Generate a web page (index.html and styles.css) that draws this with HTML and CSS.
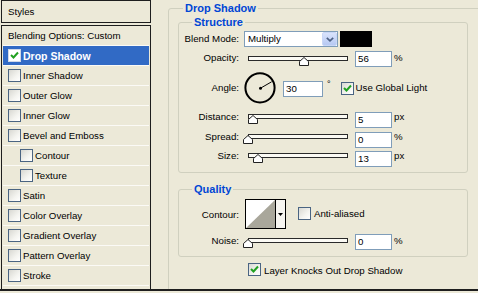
FILE: index.html
```html
<!DOCTYPE html>
<html>
<head>
<meta charset="utf-8">
<link rel="stylesheet" href="styles.css">
</head>
<body>
<div class="dialog">
  <div class="styles">
    <div class="styles-head">Styles</div>
    <div class="styles-list">
      <div class="item">Blending Options: Custom</div>
      <div class="item selected"><span class="cb"><svg width="11" height="11" viewBox="0 0 11 11"><polyline points="2,5 4.5,7.5 9,2.5" fill="none" stroke="#21a121" stroke-width="2"/></svg></span><span>Drop Shadow</span></div>
      <div class="item"><span class="cb"></span><span>Inner Shadow</span></div>
      <div class="item"><span class="cb"></span><span>Outer Glow</span></div>
      <div class="item"><span class="cb"></span><span>Inner Glow</span></div>
      <div class="item"><span class="cb"></span><span>Bevel and Emboss</span></div>
      <div class="item sub"><span class="cb"></span><span>Contour</span></div>
      <div class="item sub"><span class="cb"></span><span>Texture</span></div>
      <div class="item"><span class="cb"></span><span>Satin</span></div>
      <div class="item"><span class="cb"></span><span>Color Overlay</span></div>
      <div class="item"><span class="cb"></span><span>Gradient Overlay</span></div>
      <div class="item"><span class="cb"></span><span>Pattern Overlay</span></div>
      <div class="item"><span class="cb"></span><span>Stroke</span></div>
    </div>
  </div>
  <div class="main">
    <div class="group outer">
      <div class="legend">Drop Shadow</div>
      <div class="group inner structure">
        <div class="legend">Structure</div>
        <div class="row r-blend">
          <div class="lbl">Blend Mode:</div>
          <div class="select"><span class="select-label">Multiply</span><span class="select-btn"><svg width="8" height="5" viewBox="0 0 8 5"><polyline points="0.8,0.8 4,3.8 7.2,0.8" fill="none" stroke="#4d6185" stroke-width="1.7"/></svg></span></div>
          <div class="swatch"></div>
        </div>
        <div class="row r-opacity">
          <div class="lbl">Opacity:</div>
          <div class="slider"><svg class="thumb" style="left:calc(56% - 5px)" width="10" height="9" viewBox="0 0 10 9"><polygon points="0.5,8.5 0.5,4.5 5,0.5 9.5,4.5 9.5,8.5" fill="#fff" stroke="#222"/></svg></div>
          <div class="field">56</div>
          <div class="unit">%</div>
        </div>
        <div class="row r-angle">
          <div class="lbl">Angle:</div>
          <svg class="dial" width="32" height="32" viewBox="0 0 32 32"><circle cx="16" cy="15.8" r="14.6" fill="none" stroke="#000" stroke-width="2"/><line x1="16.5" y1="16.2" x2="27.6" y2="9.8" stroke="#000" stroke-width="1"/><circle cx="16.5" cy="16.2" r="1.5" fill="#000"/></svg>
          <div class="field wide">30</div>
          <div class="deg">°</div>
          <span class="cb"><svg width="11" height="11" viewBox="0 0 11 11"><polyline points="2,5 4.5,7.5 9,2.5" fill="none" stroke="#21a121" stroke-width="2"/></svg></span>
          <div class="cb-text">Use Global Light</div>
        </div>
        <div class="row r-dist">
          <div class="lbl">Distance:</div>
          <div class="slider"><svg class="thumb" style="left:calc(4% - 5px)" width="10" height="9" viewBox="0 0 10 9"><polygon points="0.5,8.5 0.5,4.5 5,0.5 9.5,4.5 9.5,8.5" fill="#fff" stroke="#222"/></svg></div>
          <div class="field">5</div>
          <div class="unit">px</div>
        </div>
        <div class="row r-spread">
          <div class="lbl">Spread:</div>
          <div class="slider"><svg class="thumb" style="left:calc(0% - 6px)" width="10" height="9" viewBox="0 0 10 9"><polygon points="0.5,8.5 0.5,4.5 5,0.5 9.5,4.5 9.5,8.5" fill="#fff" stroke="#222"/></svg></div>
          <div class="field">0</div>
          <div class="unit">%</div>
        </div>
        <div class="row r-size">
          <div class="lbl">Size:</div>
          <div class="slider"><svg class="thumb" style="left:calc(9% - 5px)" width="10" height="9" viewBox="0 0 10 9"><polygon points="0.5,8.5 0.5,4.5 5,0.5 9.5,4.5 9.5,8.5" fill="#fff" stroke="#222"/></svg></div>
          <div class="field">13</div>
          <div class="unit">px</div>
        </div>
      </div>
      <div class="group inner quality">
        <div class="legend">Quality</div>
        <div class="row r-contour">
          <div class="lbl">Contour:</div>
          <div class="contour">
            <svg class="contour-preview" width="29" height="28" viewBox="0 0 29 28"><rect width="29" height="28" fill="#fff"/><polygon points="0,28 29,28 29,0" fill="#a9a79b"/></svg>
            <div class="contour-btn"><svg width="5" height="3" viewBox="0 0 5 3"><polygon points="0,0 5,0 2.5,3" fill="#000"/></svg></div>
          </div>
          <span class="cb"></span>
          <div class="cb-text">Anti-aliased</div>
        </div>
        <div class="row r-noise">
          <div class="lbl">Noise:</div>
          <div class="slider"><svg class="thumb" style="left:calc(0% - 6px)" width="10" height="9" viewBox="0 0 10 9"><polygon points="0.5,8.5 0.5,4.5 5,0.5 9.5,4.5 9.5,8.5" fill="#fff" stroke="#222"/></svg></div>
          <div class="field">0</div>
          <div class="unit">%</div>
        </div>
      </div>
      <div class="row r-knock">
        <span class="cb"><svg width="11" height="11" viewBox="0 0 11 11"><polyline points="2,5 4.5,7.5 9,2.5" fill="none" stroke="#21a121" stroke-width="2"/></svg></span>
        <div class="cb-text">Layer Knocks Out Drop Shadow</div>
      </div>
    </div>
  </div>
</div>
</body>
</html>
```
FILE: styles.css
```css
* { box-sizing: border-box; }
html, body { margin: 0; padding: 0; }
body {
  width: 478px;
  height: 293px;
  overflow: hidden;
  background: #ece9d8;
  font-family: "Liberation Sans", Arial, sans-serif;
  font-size: 9.7px;
  color: #000;
}
.dialog {
  display: flex;
  height: 291px;
  border-bottom: 2px solid #1e1e1e;
  overflow: hidden;
}

/* left styles list */
.styles {
  width: 150px;
  margin-left: 1px;
  display: flex;
  flex-direction: column;
  flex: none;
}
.styles-head {
  height: 23px;
  border: 1px solid #1e1e1e;
  padding-left: 6px;
  line-height: 21px;
}
.styles-list {
  flex: 1;
  margin-top: 2px;
  border: 1px solid #1e1e1e;
  border-bottom: 0;
}
.item {
  height: 20px;
  margin: 0 1px;
  border-bottom: 1px solid #fbfaf6;
  display: flex;
  align-items: center;
  gap: 2px;
  padding-left: 5px;
  white-space: nowrap;
}
.item.sub { padding-left: 17px; }
.item.selected {
  background: #316ac5;
  color: #fff;
  font-weight: bold;
  font-size: 10.5px;
}
.cb {
  width: 13px;
  height: 13px;
  flex: none;
  border: 1px solid #4a6482;
  background: linear-gradient(135deg, #d8d8d2 0%, #f4f4f0 60%, #ffffff 100%);
  display: flex;
  align-items: center;
  justify-content: center;
}
.cb svg { display: block; }
.item.selected .cb { background: #fff; border-color: #d0d8e8; }

/* right side */
.main {
  flex: 1;
  overflow: hidden;
  padding: 8px 0 0 17px;
}
.group {
  border: 1px solid #d0d0bf;
  border-radius: 3px;
}
.outer {
  width: 340px;
  height: 320px;
}
.legend {
  width: fit-content;
  margin-top: -7px;
  padding: 0 2px;
  background: #ece9d8;
  color: #0046d5;
  font-weight: bold;
  font-size: 11px;
  line-height: 13px;
  white-space: nowrap;
}
.outer > .legend { margin-left: 14px; }
.inner {
  width: 290px;
  margin-left: 9px;
  padding-bottom: 6px;
}
.inner > .legend { margin-left: 13px; }
.structure { margin-top: 7px; }
.quality { margin-top: 16px; }

.row {
  display: flex;
  align-items: flex-start;
  height: 16px;
  white-space: nowrap;
}
.lbl {
  width: 60px;
  flex: none;
  text-align: right;
  line-height: 12px;
}
.unit {
  margin-left: 2px;
  line-height: 12px;
}
.field {
  width: 37px;
  height: 16px;
  flex: none;
  margin-left: 7px;
  border: 1px solid #7f9db9;
  background: #fff;
  padding-left: 2px;
  line-height: 14px;
}
.field.wide { width: 40px; }

.select {
  width: 94px;
  height: 16px;
  flex: none;
  margin-left: 5px;
  display: flex;
  align-items: center;
  border: 1px solid #7f9db9;
  background: #fff;
  padding: 0 0 0 3px;
}
.select-label { flex: 1; line-height: 14px; }
.select-btn {
  width: 15px;
  height: 14px;
  border-radius: 2px;
  border: 1px solid #c9d7f7;
  background: linear-gradient(#d9e3fc, #b7c9f3);
  display: flex;
  align-items: center;
  justify-content: center;
}
.select-btn svg { display: block; }
.swatch {
  width: 32px;
  height: 16px;
  margin-left: 2px;
  background: #000;
}

.slider {
  position: relative;
  width: 100px;
  height: 5px;
  flex: none;
  margin-left: 9px;
  border: 1px solid #2a2a2a;
  background: #fbfaf4;
}
.thumb {
  position: absolute;
  top: 0;
  display: block;
}

.dial { display: block; flex: none; margin-left: 5px; }
.deg { margin-left: 4px; margin-top: 7px; font-size: 9px; line-height: 10px; }
.cb-text { margin-left: 3px; line-height: 12px; }

/* per-row vertical placement */
.r-blend { margin-top: 2px; }
.r-blend .lbl { margin-top: 2px; }

.r-opacity { margin-top: 4px; }
.r-opacity .lbl, .r-opacity .unit { margin-top: 1px; }
.r-opacity .slider { margin-top: 5px; }

.r-angle { margin-top: 5px; height: 32px; }
.r-angle .lbl { margin-top: 10px; }
.r-angle .field { margin-top: 9px; }
.r-angle .cb { margin-left: 10px; margin-top: 10px; }
.r-angle .cb-text { margin-left: 2px; margin-top: 10px; }

.r-dist { margin-top: 7px; }
.r-spread { margin-top: 4px; }
.r-size { margin-top: 3px; }
.r-dist .slider, .r-spread .slider, .r-size .slider { margin-top: 3px; }
.r-dist .field, .r-spread .field, .r-size .field { margin-top: 1px; }

.r-contour { margin-top: 3px; height: 30px; }
.r-contour .lbl { margin-top: 10px; }
.r-contour .cb { margin-left: 12px; margin-top: 8px; }
.r-contour .cb-text { margin-top: 9px; }
.contour {
  width: 41px;
  height: 30px;
  flex: none;
  margin-left: 6px;
  display: flex;
  border: 1px solid #000;
}
.contour-preview { display: block; }
.contour-btn {
  width: 10px;
  border-left: 1px solid #000;
  background: #f6f5f0;
  display: flex;
  align-items: center;
  justify-content: center;
}
.contour-btn svg { display: block; }

.r-noise { margin-top: 5px; }
.r-noise .lbl, .r-noise .unit { margin-top: 1px; }
.r-noise .slider { margin-top: 4px; }

.r-knock { margin-top: 5px; margin-left: 79px; }
.r-knock .cb { margin-top: 1px; }
.r-knock .cb-text { margin-top: 3px; }
```
